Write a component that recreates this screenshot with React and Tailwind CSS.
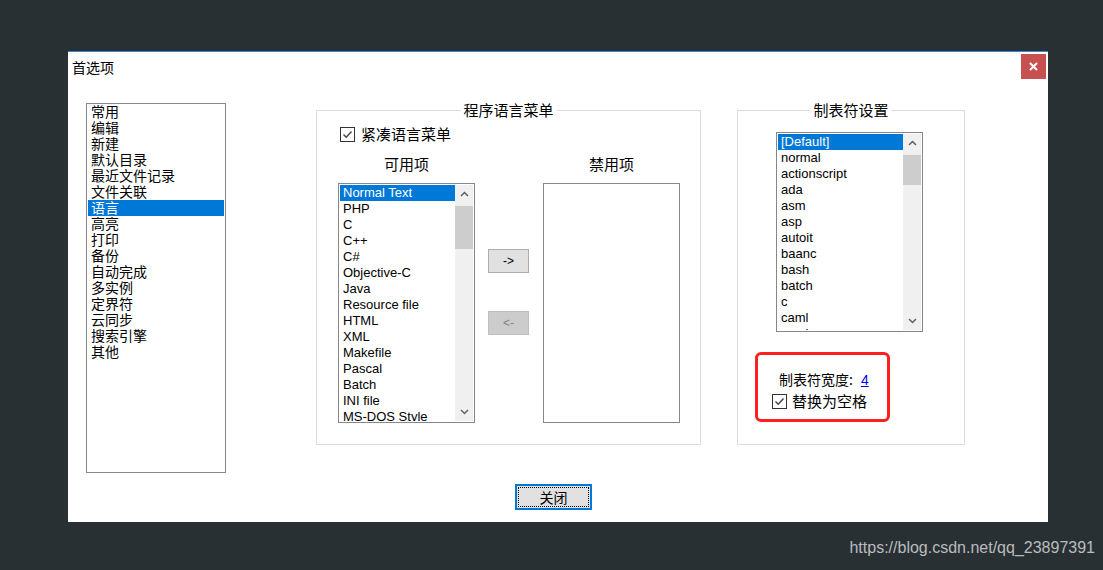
import React from 'react'

const cjk = { fontFamily: '"Noto Sans CJK SC", "Liberation Sans", sans-serif' }

const leftItems = ['常用', '编辑', '新建', '默认目录', '最近文件记录', '文件关联', '语言', '高亮', '打印', '备份', '自动完成', '多实例', '定界符', '云同步', '搜索引擎', '其他']
const langItems = ['Normal Text', 'PHP', 'C', 'C++', 'C#', 'Objective-C', 'Java', 'Resource file', 'HTML', 'XML', 'Makefile', 'Pascal', 'Batch', 'INI file', 'MS-DOS Style']
const tabItems = ['[Default]', 'normal', 'actionscript', 'ada', 'asm', 'asp', 'autoit', 'baanc', 'bash', 'batch', 'c', 'caml', 'cmake']

const Check = () => (
    <span className="w-[15px] h-[15px] border border-[#333] bg-white flex items-center justify-center shrink-0">
        <svg width="11" height="11" viewBox="0 0 11 11">
            <polyline points="1.5,5.5 4.2,8.2 9.5,2.5" fill="none" stroke="#444" strokeWidth="1.4" />
        </svg>
    </span>
)

const Chevron = ({ down }) => (
    <svg width="9" height="6" viewBox="0 0 9 6">
        <polyline points={down ? '1,1 4.5,4.5 8,1' : '1,5 4.5,1.5 8,5'} fill="none" stroke="#606060" strokeWidth="1.5" />
    </svg>
)

const Scrollbar = ({ thumb }) => (
    <div className="w-[18px] h-full bg-[#f0f0f0] flex flex-col shrink-0">
        <div className="h-[18px] flex items-center justify-center shrink-0"><Chevron /></div>
        <div className="flex-1">
            <div className={thumb} />
        </div>
        <div className="h-[18px] flex items-center justify-center shrink-0"><Chevron down /></div>
    </div>
)

const GroupBox = ({ title, className, children }) => (
    <div className={"relative border border-[#dcdcdc] shrink-0 " + className}>
        <span className="absolute -top-[11px] left-1/2 -translate-x-1/2 bg-white px-[3px] text-[15px] leading-[20px] text-black whitespace-nowrap" style={cjk}>
            {title}
        </span>
        {children}
    </div>
)

const App = () => {
    return (
        <div className="w-[1103px] h-[570px] bg-[#293034] pt-[51px] pl-[68px] relative overflow-hidden">
            {/* dialog */}
            <div className="w-[980px] h-[471px] bg-white border-t border-[#3b86d4] flex flex-col">
                {/* title bar */}
                <div className="flex items-start justify-between h-[51px] shrink-0">
                    <span className="ml-[4px] mt-[6px] text-[14px] leading-[18px] text-black" style={cjk}>首选项</span>
                    <button className="mt-[2px] mr-[2px] w-[25px] h-[25px] bg-[#c75050] flex items-center justify-center">
                        <svg width="9" height="9" viewBox="0 0 9 9">
                            <path d="M1 1 L8 8 M8 1 L1 8" stroke="white" strokeWidth="2" />
                        </svg>
                    </button>
                </div>

                {/* body */}
                <div className="flex items-start pl-[18px] shrink-0">
                    {/* left nav list */}
                    <div className="w-[140px] h-[370px] border border-[#828790] px-px shrink-0" style={cjk}>
                        {leftItems.map(item => (
                            <div key={item} className={"h-[16px] pl-[3px] text-[14px] leading-[15px] " + (item === '语言' ? 'bg-[#0078d7] text-white' : 'text-black')}>
                                {item}
                            </div>
                        ))}
                    </div>

                    {/* language menu group */}
                    <GroupBox title="程序语言菜单" className="ml-[90px] mt-[7px] w-[385px] h-[335px]">
                        <div className="flex items-center gap-[6px] ml-[23px] mt-[14px]">
                            <Check />
                            <span className="text-[15px] leading-[18px] text-black" style={cjk}>紧凑语言菜单</span>
                        </div>
                        <div className="flex ml-[21px] mt-[11px]">
                            <div className="flex flex-col items-center w-[137px]">
                                <span className="text-[15px] leading-[20px] text-black" style={cjk}>可用项</span>
                                <div className="mt-[9px] w-[137px] h-[240px] border border-[#828790] p-px flex" style={{ fontFamily: '"Liberation Sans", Arial, sans-serif' }}>
                                    <div className="flex-1 overflow-hidden">
                                        {langItems.map(item => (
                                            <div key={item} className={"h-[16px] pl-[3px] text-[13px] leading-[16px] whitespace-nowrap " + (item === 'Normal Text' ? 'bg-[#0078d7] text-white' : 'text-black')}>
                                                {item}
                                            </div>
                                        ))}
                                    </div>
                                    <Scrollbar thumb="mt-[3px] h-[43px] bg-[#cdcdcd]" />
                                </div>
                            </div>

                            <div className="flex flex-col ml-[13px] mt-[95px] gap-[38px]" style={{ fontFamily: '"Liberation Sans", Arial, sans-serif' }}>
                                <button className="w-[41px] h-[24px] bg-[#e1e1e1] border border-[#adadad] text-[12px] text-black">-&gt;</button>
                                <button className="w-[41px] h-[24px] bg-[#cccccc] border border-[#bfbfbf] text-[12px] text-[#838383]">&lt;-</button>
                            </div>

                            <div className="flex flex-col items-center w-[137px] ml-[14px]">
                                <span className="text-[15px] leading-[20px] text-black" style={cjk}>禁用项</span>
                                <div className="mt-[9px] w-[137px] h-[240px] border border-[#828790]" />
                            </div>
                        </div>
                    </GroupBox>

                    {/* tab settings group */}
                    <GroupBox title="制表符设置" className="ml-[36px] mt-[7px] w-[228px] h-[335px]">
                        <div className="ml-[38px] mt-[21px] w-[147px] h-[200px] border border-[#828790] p-px flex" style={{ fontFamily: '"Liberation Sans", Arial, sans-serif' }}>
                            <div className="flex-1 overflow-hidden">
                                {tabItems.map(item => (
                                    <div key={item} className={"h-[16px] pl-[3px] text-[13px] leading-[16px] whitespace-nowrap " + (item === '[Default]' ? 'bg-[#0078d7] text-white' : 'text-black')}>
                                        {item}
                                    </div>
                                ))}
                            </div>
                            <Scrollbar thumb="mt-[3px] h-[30px] bg-[#cdcdcd]" />
                        </div>

                        <div className="ml-[17px] mt-[20px] w-[135px] h-[70px] border-[3px] border-[#ff1f1f] rounded-[6px] flex flex-col pl-[14px] pt-[15px]">
                            <div className="flex items-baseline ml-[7px] text-[14px] leading-[18px] text-black" style={cjk}>
                                <span>制表符宽度:</span>
                                <span className="ml-[8px] text-[#0000ee] underline" style={{ fontFamily: '"Liberation Sans", Arial, sans-serif' }}>4</span>
                            </div>
                            <div className="flex items-center gap-[5px] mt-[3px]">
                                <Check />
                                <span className="text-[15px] leading-[18px] text-black" style={cjk}>替换为空格</span>
                            </div>
                        </div>
                    </GroupBox>
                </div>

                {/* footer */}
                <div className="flex mt-[11px] pl-[447px] shrink-0">
                    <button className="w-[77px] h-[26px] border-2 border-[#0078d7] bg-[#e1e1e1] p-px">
                        <span className="w-full h-full border border-dotted border-black flex items-center justify-center text-[14px] text-black" style={cjk}>关闭</span>
                    </button>
                </div>
            </div>

            <span className="absolute right-[8px] bottom-[10px] text-[16px] text-[#b9bcbe]" style={{ fontFamily: '"Liberation Sans", Arial, sans-serif' }}>
                https://blog.csdn.net/qq_23897391
            </span>
        </div>
    )
}

export default App
